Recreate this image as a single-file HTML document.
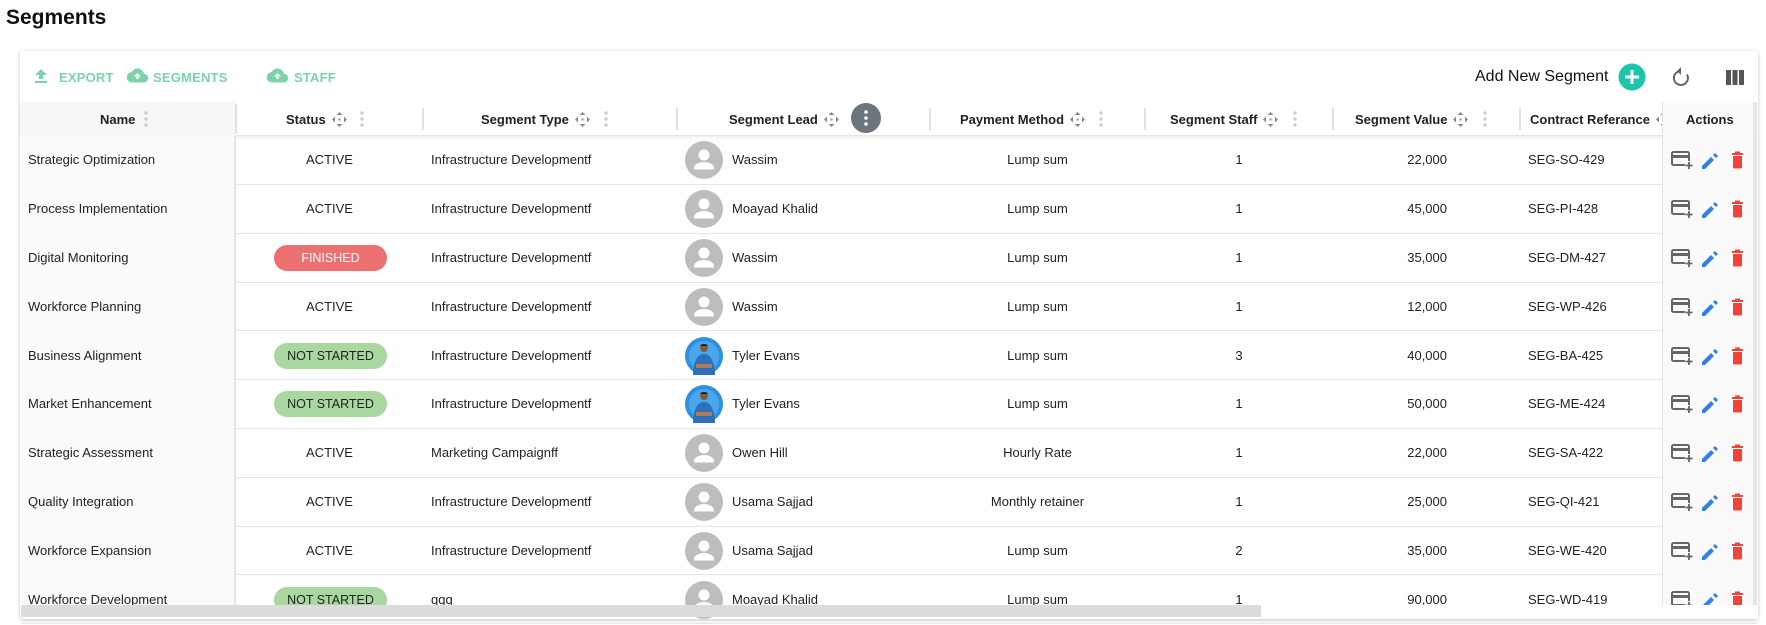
<!DOCTYPE html>
<html><head><meta charset="utf-8">
<style>
*{box-sizing:border-box;margin:0;padding:0}
body{width:1766px;height:625px;overflow:hidden;background:#fff;font-family:"Liberation Sans",Arial,sans-serif;color:#222;position:relative}
.abs{position:absolute}
h1{position:absolute;left:6px;top:6px;font-size:21px;font-weight:bold;color:#111}
.card{position:absolute;left:20px;top:51px;width:1738px;height:568px;background:#fff;box-shadow:0 1px 4px rgba(0,0,0,.25);border-radius:4px;overflow:hidden}
.tb{position:absolute;top:70px;font-size:13px;font-weight:bold;color:#7dd3a8;letter-spacing:.2px}
.hdr{position:absolute;top:102px;height:34px;left:21px;width:1736px;border-bottom:1px solid #e4e4e4;box-shadow:0 2px 3px rgba(0,0,0,.06)}
.ht{position:absolute;top:111px;font-size:13px;font-weight:bold;color:#222;white-space:nowrap;display:flex;align-items:center;height:16px}
.ht svg{margin-left:6px}
.vd{position:absolute;top:108px;width:2px;height:22px;background:#e2e2e2}
.row{position:absolute;left:21px;width:1736px;height:49px;border-bottom:1.5px solid #e6e6e6}
.c{position:absolute;font-size:13px;color:#222;white-space:nowrap}
.badge{position:absolute;left:274px;width:113px;height:26px;border-radius:13px;font-size:12.5px;text-align:center;line-height:26px}
</style></head><body>
<h1>Segments</h1>
<div class="card"></div>
<svg class="abs" style="left:34px;top:68px" width="14" height="16" viewBox="0 0 14 16"><path d="M7 1 L13 7 H9 V11 H5 V7 H1 Z" fill="#7dd3a8"/><rect x="1" y="13" width="12" height="2" fill="#7dd3a8"/></svg>
<div class="tb" style="left:59px">EXPORT</div>
<svg class="abs" style="left:127px;top:68px" width="21" height="15" viewBox="0 0 24 16"><path d="M19.4 6A7.5 7.5 0 0 0 5.4 4 6 6 0 0 0 6 16h13a5 5 0 0 0 .4-10z" fill="#7dd3a8"/><path d="M12 5l-4 4h2.6v3h2.8V9H16z" fill="#fff"/></svg>
<div class="tb" style="left:153px">SEGMENTS</div>
<svg class="abs" style="left:267px;top:68px" width="21" height="15" viewBox="0 0 24 16"><path d="M19.4 6A7.5 7.5 0 0 0 5.4 4 6 6 0 0 0 6 16h13a5 5 0 0 0 .4-10z" fill="#7dd3a8"/><path d="M12 5l-4 4h2.6v3h2.8V9H16z" fill="#fff"/></svg>
<div class="tb" style="left:294px">STAFF</div>
<div class="abs" style="left:1475px;top:68px;font-size:16px;color:#111">Add New Segment</div>
<svg class="abs" style="left:1618px;top:63px" width="28" height="28" viewBox="0 0 28 28"><circle cx="14" cy="14" r="13.5" fill="#1cc4a8"/><path d="M14 7v14M7 14h14" stroke="#fff" stroke-width="3"/></svg>
<svg class="abs" style="left:1672px;top:67px" width="18" height="20" viewBox="0 0 18 20"><path d="M9 4a7 7 0 1 0 6 3.5" fill="none" stroke="#666" stroke-width="2"/><path d="M9 0v8l-4-4z" fill="#666"/></svg>
<svg class="abs" style="left:1726px;top:70px" width="18" height="15" viewBox="0 0 18 15"><rect x="0" y="0" width="5" height="15" fill="#555"/><rect x="6.5" y="0" width="5" height="15" fill="#555"/><rect x="13" y="0" width="5" height="15" fill="#555"/></svg>

<div class="hdr"></div>
<div class="abs" style="left:21px;top:102px;width:215px;height:34px;background:#f7f7f7"></div>
<div class="abs" style="left:1662px;top:102px;width:95px;height:516px;background:#fafafa;border-left:1.5px solid #e2e2e2;z-index:3"></div>
<div class="abs" style="left:21px;top:136px;width:215px;height:470px;background:#fafafa;border-right:2px solid #e6e6e6;z-index:1"></div>

<svg width="0" height="0" style="position:absolute"><defs>
<g id="mv"><path d="M7.5 0l3 3h-6zM7.5 15l3-3h-6zM0 7.5l3-3v6zM15 7.5l-3-3v6z" fill="#888"/><circle cx="7.5" cy="7.5" r="1.3" fill="#aaa"/></g>
<g id="dt"><circle cx="2" cy="2" r="1.7" fill="#ccc"/><circle cx="2" cy="8" r="1.7" fill="#ccc"/><circle cx="2" cy="14" r="1.7" fill="#ccc"/></g>
<g id="user"><circle cx="19" cy="19" r="19" fill="#bdbdbd"/><circle cx="19" cy="14" r="5.5" fill="#fff"/><path d="M9 27c0-4 6-6 10-6s10 2 10 6v1.5H9z" fill="#fff"/></g>
<g id="tyler"><circle cx="19" cy="19" r="19" fill="#2f8fe0"/><circle cx="19" cy="19" r="15" fill="#4aa6ee"/><circle cx="19" cy="11" r="4" fill="#8a5a3c"/><path d="M19 7a4 3 0 0 1 4 2h-8a4 3 0 0 1 4-2z" fill="#222"/><path d="M8 38c0-12 4-21 11-21s11 9 11 21z" fill="#2d6fb8"/><path d="M11 27h16v4H11z" fill="#b07a55"/></g>
<g id="cardp"><rect x="1" y="2" width="17" height="13" rx="1.5" fill="none" stroke="#666" stroke-width="2"/><rect x="1" y="5" width="17" height="3" fill="#666"/><rect x="14" y="11" width="8" height="8" fill="#fafafa"/><path d="M18 12v7M14.5 15.5h7" stroke="#666" stroke-width="1.8"/></g>
<g id="pen"><path d="M2 16v3h3l9-9-3-3z" fill="#2f80ed"/><path d="M15 3l3 3-2 2-3-3z" fill="#2f80ed"/></g>
<g id="trash"><path d="M2 3h11v2H2z M5 1.5h5v2H5z" fill="#f0443a"/><path d="M3 6h9v11a1.5 1.5 0 0 1-1.5 1.5h-6A1.5 1.5 0 0 1 3 17z" fill="#f0443a"/></g>
</defs></svg>

<div class="ht" style="left:100px">Name</div>
<div class="ht" style="left:286px">Status<svg width="15" height="15"><use href="#mv"/></svg></div>
<div class="ht" style="left:481px">Segment Type<svg width="15" height="15"><use href="#mv"/></svg></div>
<div class="ht" style="left:729px">Segment Lead<svg width="15" height="15"><use href="#mv"/></svg></div>
<div class="ht" style="left:960px">Payment Method<svg width="15" height="15"><use href="#mv"/></svg></div>
<div class="ht" style="left:1170px">Segment Staff<svg width="15" height="15"><use href="#mv"/></svg></div>
<div class="ht" style="left:1355px">Segment Value<svg width="15" height="15"><use href="#mv"/></svg></div>
<div class="ht" style="left:1530px">Contract Referance<svg width="15" height="15"><use href="#mv"/></svg></div>
<div class="ht" style="left:1686px;z-index:4">Actions</div>
<div class="vd" style="left:235px;height:30px;top:104px"></div>
<div class="vd" style="left:422px"></div><div class="vd" style="left:676px"></div><div class="vd" style="left:929px"></div><div class="vd" style="left:1144px"></div><div class="vd" style="left:1332px"></div><div class="vd" style="left:1519px"></div>
<svg class="abs" style="left:144px;top:111px" width="4" height="16"><use href="#dt"/></svg>
<svg class="abs" style="left:360px;top:111px" width="4" height="16"><use href="#dt"/></svg>
<svg class="abs" style="left:604px;top:111px" width="4" height="16"><use href="#dt"/></svg>
<svg class="abs" style="left:851px;top:103px" width="30" height="30" viewBox="0 0 30 30"><circle cx="15" cy="15" r="15" fill="#6c757d"/><circle cx="15" cy="9" r="1.8" fill="#fff"/><circle cx="15" cy="15" r="1.8" fill="#fff"/><circle cx="15" cy="21" r="1.8" fill="#fff"/></svg>
<svg class="abs" style="left:1099px;top:111px" width="4" height="16"><use href="#dt"/></svg>
<svg class="abs" style="left:1293px;top:111px" width="4" height="16"><use href="#dt"/></svg>
<svg class="abs" style="left:1483px;top:111px" width="4" height="16"><use href="#dt"/></svg>

<div id="rows"></div>
<script>
var d=[["Strategic Optimization","A","Infrastructure Developmentf","Wassim",0,"Lump sum","1","22,000","SEG-SO-429"],
["Process Implementation","A","Infrastructure Developmentf","Moayad Khalid",0,"Lump sum","1","45,000","SEG-PI-428"],
["Digital Monitoring","F","Infrastructure Developmentf","Wassim",0,"Lump sum","1","35,000","SEG-DM-427"],
["Workforce Planning","A","Infrastructure Developmentf","Wassim",0,"Lump sum","1","12,000","SEG-WP-426"],
["Business Alignment","N","Infrastructure Developmentf","Tyler Evans",1,"Lump sum","3","40,000","SEG-BA-425"],
["Market Enhancement","N","Infrastructure Developmentf","Tyler Evans",1,"Lump sum","1","50,000","SEG-ME-424"],
["Strategic Assessment","A","Marketing Campaignff","Owen Hill",0,"Hourly Rate","1","22,000","SEG-SA-422"],
["Quality Integration","A","Infrastructure Developmentf","Usama Sajjad",0,"Monthly retainer","1","25,000","SEG-QI-421"],
["Workforce Expansion","A","Infrastructure Developmentf","Usama Sajjad",0,"Lump sum","2","35,000","SEG-WE-420"],
["Workforce Development","N","qqq","Moayad Khalid",0,"Lump sum","1","90,000","SEG-WD-419"]];
var h="";
d.forEach(function(r,i){var top=136+i*48.8,cy=top+24.4,ty=cy-8;
h+='<div class="row" style="top:'+top+'px"></div>';
h+='<div class="c" style="left:28px;top:'+ty+'px;z-index:2">'+r[0]+'</div>';
if(r[1]=="A")h+='<div class="c" style="left:236px;width:187px;text-align:center;top:'+ty+'px">ACTIVE</div>';
else if(r[1]=="F")h+='<div class="badge" style="top:'+(cy-13)+'px;background:#ec7070;color:#fff">FINISHED</div>';
else h+='<div class="badge" style="top:'+(cy-13)+'px;background:#a8d8a0;color:#222">NOT STARTED</div>';
h+='<div class="c" style="left:431px;top:'+ty+'px">'+r[2]+'</div>';
h+='<svg class="abs" style="left:685px;top:'+(cy-19)+'px" width="38" height="38"><use href="#'+(r[4]?'tyler':'user')+'"/></svg>';
h+='<div class="c" style="left:732px;top:'+ty+'px">'+r[3]+'</div>';
h+='<div class="c" style="left:930px;width:215px;text-align:center;top:'+ty+'px">'+r[5]+'</div>';
h+='<div class="c" style="left:1145px;width:188px;text-align:center;top:'+ty+'px">'+r[6]+'</div>';
h+='<div class="c" style="left:1333px;width:114px;text-align:right;top:'+ty+'px">'+r[7]+'</div>';
h+='<div class="c" style="left:1528px;top:'+ty+'px">'+r[8]+'</div>';
h+='<svg class="abs" style="left:1671px;top:'+(cy-10)+'px;z-index:5" width="22" height="20"><use href="#cardp"/></svg>';
h+='<svg class="abs" style="left:1700px;top:'+(cy-10)+'px;z-index:5" width="20" height="20"><use href="#pen"/></svg>';
h+='<svg class="abs" style="left:1730px;top:'+(cy-10)+'px;z-index:5" width="15" height="20"><use href="#trash"/></svg>';
});
document.getElementById('rows').innerHTML=h;
</script>
<div class="abs" style="left:21px;top:605px;width:1240px;height:12px;background:#dcdcdc;z-index:6"></div>
<div class="abs" style="left:1261px;top:605px;width:497px;height:14px;background:#fff;z-index:6"></div>
<div class="abs" style="left:1753px;top:102px;width:4px;height:503px;background:#e6e6e6;z-index:6"></div>
</body></html>
